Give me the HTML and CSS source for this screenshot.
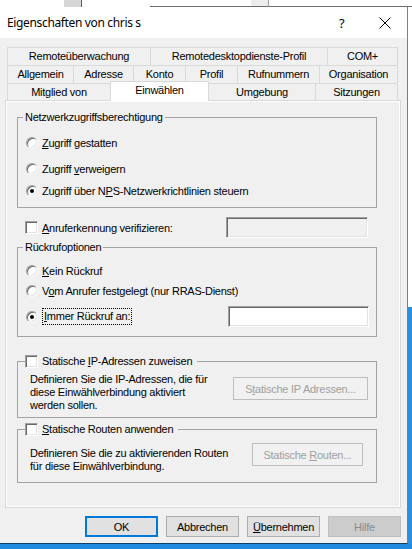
FILE: index.html
```html
<!DOCTYPE html>
<html lang="de">
<head>
<meta charset="utf-8">
<title>Eigenschaften von chris s</title>
<link rel="stylesheet" href="styles.css">
</head>
<body>
<div class="screen">
  <div class="strip">
    <span class="s-gap1"></span><span class="s-blk1"></span><span class="s-v1"></span><span class="s-gap2"></span><span class="s-line1"></span><span class="s-blk2"></span><span class="s-v2"></span><span class="s-line2"></span>
  </div>
  <div class="main">
    <div class="window">
      <div class="titlebar">
        <span class="title">Eigenschaften von chris s</span>
        <span class="help">?</span>
        <span class="close"><svg width="12" height="12" viewBox="0 0 12 12"><path d="M0.5 0.5 L11.5 11.5 M11.5 0.5 L0.5 11.5" stroke="#000" stroke-width="1" fill="none"/></svg></span>
      </div>
      <div class="body">
        <div class="tabs">
          <div class="tabrow r1">
            <div class="tab">Remoteüberwachung</div>
            <div class="tab">Remotedesktopdienste-Profil</div>
            <div class="tab">COM+</div>
          </div>
          <div class="tabrow r2">
            <div class="tab">Allgemein</div>
            <div class="tab">Adresse</div>
            <div class="tab">Konto</div>
            <div class="tab">Profil</div>
            <div class="tab">Rufnummern</div>
            <div class="tab">Organisation</div>
          </div>
          <div class="tabrow r3">
            <div class="tab">Mitglied von</div>
            <div class="tab selected">Einwählen</div>
            <div class="tab">Umgebung</div>
            <div class="tab">Sitzungen</div>
          </div>
        </div>
        <div class="panel">
          <div class="page">
            <fieldset class="grp g1">
              <legend>Netzwerkzugriffsberechtigung</legend>
              <div class="opt o1"><span class="radio"></span><span><u>Z</u>ugriff gestatten</span></div>
              <div class="opt o2"><span class="radio"></span><span>Zugriff <u>v</u>erweigern</span></div>
              <div class="opt o3"><span class="radio checked"></span><span>Zugriff über N<u>P</u>S-Netzwerkrichtlinien steuern</span></div>
            </fieldset>
            <div class="chkrow">
              <span class="check"></span><span class="chklabel"><u>A</u>nruferkennung verifizieren:</span>
              <span class="textbox disabled"></span>
            </div>
            <fieldset class="grp g2">
              <legend>Rückrufoptionen</legend>
              <div class="opt p1"><span class="radio"></span><span><u>K</u>ein Rückruf</span></div>
              <div class="opt p2"><span class="radio"></span><span>V<u>o</u>m Anrufer festgelegt (nur RRAS-Dienst)</span></div>
              <div class="opt p3"><span class="radio checked"></span><span class="focus"><u>I</u>mmer Rückruf an:</span><span class="textbox"></span></div>
            </fieldset>
            <fieldset class="grp g3">
              <legend><span class="check"></span><span>Statische <u>I</u>P-Adressen zuweisen</span></legend>
              <div class="descrow">
                <div class="desc">Definieren Sie die IP-Adressen, die für<br>diese Einwählverbindung aktiviert<br>werden sollen.</div>
                <button class="btn ghost ipbtn">S<u>t</u>atische IP Adressen...</button>
              </div>
            </fieldset>
            <fieldset class="grp g4">
              <legend><span class="check"></span><span><u>S</u>tatische Routen anwenden</span></legend>
              <div class="descrow">
                <div class="desc">Definieren Sie die zu aktivierenden Routen<br>für diese Einwählverbindung.</div>
                <button class="btn ghost rtbtn">Statische <u>R</u>outen...</button>
              </div>
            </fieldset>
          </div>
        </div>
        <div class="btns">
          <button class="btn ok">OK</button>
          <button class="btn">Abbrechen</button>
          <button class="btn"><u>Ü</u>bernehmen</button>
          <button class="btn off">Hilfe</button>
        </div>
      </div>
    </div>
    <div class="side"></div>
  </div>
  <div class="taskbar"></div>
</div>
</body>
</html>
```
FILE: styles.css
```css
* { box-sizing: border-box; }
html, body { margin: 0; padding: 0; background: #fff; }
.screen {
  width: 412px; height: 549px; overflow: hidden; background: #fff;
  font-family: "Liberation Sans", Arial, sans-serif; font-size: 11px; color: #000;
  letter-spacing: -0.25px;
}
u { text-decoration: underline; text-underline-offset: 1px; }

/* desktop strip behind window */
.strip { display: flex; height: 7px; }
.strip span { display: block; height: 7px; }
.s-gap1 { width: 64px; }
.s-blk1 { width: 17px; background: #d6d6d6; }
.s-v1 { width: 1px; background: #5c5c5c; }
.s-gap2 { width: 68px; }
.s-line1 { width: 101px; border-bottom: 1px solid #6e6e6e; }
.s-blk2 { width: 17px; background: #ededed; border-bottom: 1px solid #6e6e6e; }
.s-v2 { width: 1px; background: #9c9c9c; }
.s-line2 { flex: 1; border-bottom: 1px solid #6e6e6e; }

.main { display: flex; height: 537px; }
.window {
  width: 408px; height: 537px;
  border-right: 1px solid #7d7d7d; border-bottom: 1px solid #0e3f66;
  background: #f0f0f0;
}
.side { flex: 1; background: linear-gradient(#fff 0, #fff 300px, #2d8fdc 300px); }
.taskbar { height: 5px; background: #1f8ae0; }

.titlebar {
  height: 31px; background: #fff; display: flex; align-items: center;
  font-family: "Noto Sans", "Liberation Sans", sans-serif; font-size: 12px;
  letter-spacing: -0.35px;
}
.title { padding-left: 7px; flex: 1; }
.help { width: 12px; margin-right: 28px; font-size: 13px; }
.close { width: 12px; height: 12px; margin-right: 16px; display: flex; }

.body { height: 505px; padding: 9px 0 0 5px; }

.tabs { margin-left: 2px; }
.tabrow { display: flex; height: 18px; }
.tab {
  border: 1px solid #d9d9d9; border-bottom: 0; margin-left: -1px;
  background: #f0f0f0; text-align: center; line-height: 17px; height: 18px;
  white-space: nowrap;
}
.tab:first-child { margin-left: 0; }
.r1 .tab:nth-child(1) { width: 144px; }
.r1 .tab:nth-child(2) { width: 178px; }
.r1 .tab:nth-child(3) { width: 71px; }
.r2 .tab:nth-child(1) { width: 67px; }
.r2 .tab:nth-child(2) { width: 61px; }
.r2 .tab:nth-child(3) { width: 53px; }
.r2 .tab:nth-child(4) { width: 53px; }
.r2 .tab:nth-child(5) { width: 83px; }
.r2 .tab:nth-child(6) { width: 79px; }
.r3 { height: 17px; align-items: flex-end; }
.r3 .tab { height: 17px; line-height: 17px; }
.r3 .tab:nth-child(1) { width: 104px; }
.r3 .tab:nth-child(2) { width: 99px; }
.r3 .tab:nth-child(3) { width: 108px; }
.r3 .tab:nth-child(4) { width: 83px; }
.r3 .tab.selected {
  height: 20px; margin-bottom: -1px; background: #fff; position: relative; z-index: 1;
  line-height: 17px;
}

.panel {
  width: 396px; height: 408px; border: 1px solid #d9d9d9; padding: 1px; background: #fff;
}
.page { height: 100%; background: #f0f0f0; padding-top: 0; overflow: hidden; }

.grp {
  margin: 0 0 0 10px; width: 360px; min-width: 0;
  border: 1px solid #a3a3a3; padding: 0 0 8px 0;
}
.grp legend { margin-left: 5px; padding: 0 2px; line-height: 14px; height: 14px; }
.g1 { margin-top: 8px; }
.g2 { margin-top: 2px; padding-bottom: 9px; }
.g3 { margin-top: 17px; padding-bottom: 5px; }
.g4 { margin-top: 4px; padding-bottom: 9px; }
.g3 legend, .g4 legend { margin-left: 7px; padding: 0 5px 0 0; display: flex; align-items: center; }

.opt { display: flex; align-items: center; height: 16px; margin-left: 8px; white-space: nowrap; }
.o1 { margin-top: 11px; }
.o2 { margin-top: 10px; }
.o3 { margin-top: 6px; }
.p1 { margin-top: 9px; }
.p2 { margin-top: 4px; }
.p3 { margin-top: 7px; height: 21px; width: 343px; }

.radio {
  width: 12px; height: 12px; border-radius: 50%; background: #fff; margin-right: 4px;
  border: 1px solid; border-color: #a0a0a0 #f8f8f8 #f8f8f8 #a0a0a0;
  box-shadow: inset 1px 1px 0 #696969, inset -1px -1px 0 #e3e3e3;
  display: flex; align-items: center; justify-content: center; flex: none;
}
.radio.checked::after {
  content: ""; width: 4px; height: 4px; border-radius: 50%; background: #000;
}
.check {
  width: 13px; height: 13px; background: #fff; flex: none; margin-right: 4px;
  border: 1px solid; border-color: #a0a0a0 #fff #fff #a0a0a0;
  box-shadow: inset 1px 1px 0 #696969, inset -1px -1px 0 #e3e3e3;
}
.chkrow {
  display: flex; align-items: center; height: 21px; width: 343px;
  margin: 9px 0 0 18px; white-space: nowrap;
}
.textbox {
  margin-left: auto; width: 142px; height: 21px; background: #fff;
  border: 1px solid; border-color: #a0a0a0 #fff #fff #a0a0a0;
  box-shadow: inset 1px 1px 0 #696969, inset -1px -1px 0 #e3e3e3;
}
.textbox.disabled { background: #f0f0f0; }
.p3 .textbox { width: 141px; }
.focus { border: 1px dotted #000; padding: 0 1px 1px 1px; margin-left: 0; line-height: 14px; }

.descrow { display: flex; align-items: flex-start; margin-left: 12px; }
.desc { line-height: 13px; white-space: nowrap; }
.g3 .desc { margin-top: 5px; }
.g4 .desc { margin-top: 11px; }

.btn {
  font-family: "Liberation Sans", Arial, sans-serif; font-size: 11px; color: #000;
  letter-spacing: -0.25px;
  background: #e1e1e1; border: 1px solid #adadad; padding: 0; width: 73px; height: 21px;
  white-space: nowrap;
}
.btn.ghost { background: #f1f1f1; border-color: #bdbdbd; color: #a0a0a0; height: 23px; }
.ipbtn { width: 135px; margin: 9px 8px 0 auto; }
.rtbtn { width: 111px; margin: 7px 13px 0 auto; }
.btn.ok { border: 2px solid #0078d7; }
.btn.off { background: #cccccc; border-color: #bfbfbf; color: #8a8a8a; }
.btns { display: flex; gap: 8px; margin: 8px 0 0 80px; }
```
